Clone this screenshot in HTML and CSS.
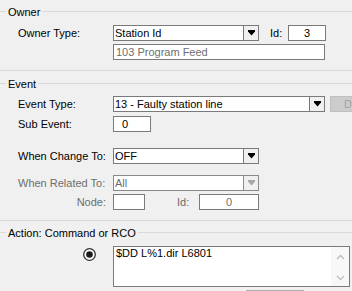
FILE: index.html
```html
<!DOCTYPE html>
<html>
<head>
<meta charset="utf-8">
<link rel="stylesheet" href="styles.css">
</head>
<body>
<div class="group g-owner">
  <div class="gtitle">Owner</div>
  <div class="row mt6">
    <span class="lbl">Owner Type:</span>
    <div class="combo w146"><span class="ctext">Station Id</span><span class="cbtn"><svg width="7" height="6" viewBox="0 0 7 6"><polygon points="0,0 7,0 7,1.5 3.5,5.5 0,1.5" fill="#000"/></svg></span></div>
    <span class="lbl-id1">Id:</span>
    <div class="edit w38 center">3</div>
  </div>
  <div class="row mt3 indent">
    <div class="edit w212 ro">103 Program Feed</div>
  </div>
</div>

<div class="group g-event">
  <div class="gtitle">Event</div>
  <div class="row mt5">
    <span class="lbl">Event Type:</span>
    <div class="combo w212"><span class="ctext">13 - Faulty station line</span><span class="cbtn"><svg width="7" height="6" viewBox="0 0 7 6"><polygon points="0,0 7,0 7,1.5 3.5,5.5 0,1.5" fill="#000"/></svg></span></div>
    <div class="dbtn">D</div>
  </div>
  <div class="row mt4">
    <span class="lbl">Sub Event:</span>
    <div class="edit w38 pad8">0</div>
  </div>
  <div class="row mt16">
    <span class="lbl">When Change To:</span>
    <div class="combo w146"><span class="ctext">OFF</span><span class="cbtn"><svg width="7" height="6" viewBox="0 0 7 6"><polygon points="0,0 7,0 7,1.5 3.5,5.5 0,1.5" fill="#000"/></svg></span></div>
  </div>
  <div class="row mt11">
    <span class="lbl dis">When Related To:</span>
    <div class="combo w146 cdis"><span class="ctext">All</span><span class="cbtn"><svg width="7" height="6" viewBox="0 0 7 6"><polygon points="0,0 7,0 7,1.5 3.5,5.5 0,1.5" fill="#a8a8a8"/></svg></span></div>
  </div>
  <div class="row mt3">
    <span class="lbl dis right">Node:</span>
    <div class="edit w32"></div>
    <span class="lbl-id2 dis">Id:</span>
    <div class="edit w60 center dtext">0</div>
  </div>
</div>

<div class="group g-action">
  <div class="gtitle">Action: Command or RCO</div>
  <div class="memo-row mt6">
    <svg class="radio" width="13" height="13" viewBox="0 0 13 13"><circle cx="6.5" cy="6.5" r="5.8" fill="#fff" stroke="#333" stroke-width="1.3"/><circle cx="6.5" cy="6.5" r="3.3" fill="#1a1a1a"/></svg>
    <div class="memo">
      <div class="memo-text">$DD L%1.dir L6801</div>
      <div class="vscroll">
        <svg width="9" height="6" viewBox="0 0 9 6"><polyline points="1,5 4.5,1.5 8,5" fill="none" stroke="#bdbdbd" stroke-width="1.3"/></svg>
        <svg width="9" height="6" viewBox="0 0 9 6"><polyline points="1,1 4.5,4.5 8,1" fill="none" stroke="#bdbdbd" stroke-width="1.3"/></svg>
      </div>
    </div>
  </div>
  <div class="btn-row">
    <div class="pbtn"></div>
  </div>
</div>
</body>
</html>
```

FILE: styles.css
```css
html, body {
  margin: 0;
  padding: 0;
}
body {
  width: 352px;
  height: 291px;
  overflow: hidden;
  background: #f0f0f0;
  font-family: "Liberation Sans", Arial, sans-serif;
  font-size: 11px;
  color: #000;
}
.group {
  border-top: 1px solid #dadada;
  border-bottom: 1px solid #dadada;
  padding-bottom: 10px;
}
.g-owner { margin-top: 11px; }
.g-event { margin-top: 12px; }
.g-action { margin-top: 11px; padding-bottom: 0; border-bottom: none; }
.gtitle {
  display: table;
  margin: -6px 0 0 6px;
  padding: 0 2px;
  background: #f0f0f0;
  line-height: 13px;
  height: 13px;
}
.row {
  display: flex;
  align-items: center;
  height: 16px;
  padding-left: 18px;
}
.row.indent { padding-left: 113px; }
.mt3 { margin-top: 3px; }
.mt4 { margin-top: 4px; }
.mt5 { margin-top: 5px; }
.mt6 { margin-top: 6px; }
.mt11 { margin-top: 11px; }
.mt16 { margin-top: 16px; }
.lbl {
  width: 95px;
  flex: none;
  line-height: 16px;
  white-space: nowrap;
}
.lbl.right {
  text-align: right;
  width: 88px;
  padding-right: 7px;
}
.dis { color: #6d6d6d; }
.lbl-id1 { width: 18px; margin-left: 11px; flex: none; }
.lbl-id2 { width: 22px; margin-left: 32px; flex: none; }
.combo {
  box-sizing: border-box;
  height: 16px;
  border: 1px solid #7a7a7a;
  background: #fff;
  display: flex;
  flex: none;
}
.ctext {
  flex: 1;
  padding-left: 1px;
  line-height: 14px;
  white-space: nowrap;
  overflow: hidden;
}
.cbtn {
  width: 14px;
  border-left: 1px solid #7a7a7a;
  background: #f0f0f0;
  display: flex;
  align-items: center;
  justify-content: center;
  flex: none;
}
.cdis { border-color: #8a8a8a; }
.cdis .ctext { color: #6d6d6d; }
.cdis .cbtn { border-left-color: #8a8a8a; }
.edit {
  box-sizing: border-box;
  height: 16px;
  border: 1px solid #7a7a7a;
  background: #fff;
  line-height: 14px;
  padding-left: 2px;
  flex: none;
  white-space: nowrap;
}
.edit.center { text-align: center; padding-left: 0; }
.edit.pad8 { padding-left: 8px; }
.edit.ro, .edit.dtext { color: #6d6d6d; }
.w32 { width: 32px; }
.w38 { width: 38px; }
.w60 { width: 60px; }
.w146 { width: 146px; }
.w212 { width: 212px; }
.dbtn {
  box-sizing: border-box;
  flex: none;
  width: 22px;
  height: 16px;
  margin-left: 5px;
  background: #cccccc;
  border: 1px solid #bfbfbf;
  border-right: none;
  color: #a3a3a3;
  line-height: 14px;
  padding-left: 13px;
  overflow: hidden;
}
.memo-row {
  display: flex;
  align-items: flex-start;
  padding-left: 83px;
}
.radio {
  flex: none;
  margin-top: 2px;
}
.memo {
  box-sizing: border-box;
  margin-left: 17px;
  width: 237px;
  height: 41px;
  border: 1px solid #7a7a7a;
  background: #fff;
  display: flex;
}
.memo-text {
  flex: 1;
  padding: 0 2px;
  line-height: 13px;
}
.vscroll {
  width: 18px;
  background: #f8f8f8;
  display: flex;
  flex-direction: column;
  justify-content: space-between;
  align-items: center;
  padding: 7px 0 5px;
}
.btn-row {
  margin-top: 3px;
  padding-left: 246px;
}
.pbtn {
  width: 58px;
  height: 1px;
  background: #adadad;
}
```
